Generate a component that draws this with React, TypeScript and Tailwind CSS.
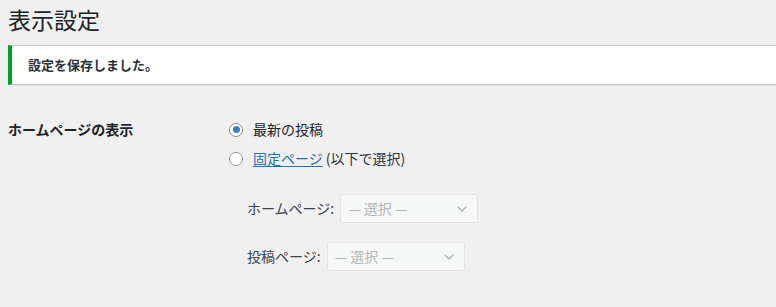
import React from 'react';

const font = { fontFamily: '"Noto Sans CJK JP", "Noto Sans", sans-serif' };

const Radio = ({ checked }: { checked?: boolean }) => (
  <span className="flex h-[14px] w-[14px] shrink-0 items-center justify-center rounded-full border border-[#8c8f94] bg-white">
    {checked && <span className="h-[7px] w-[7px] rounded-full bg-[#3582c4]" />}
  </span>
);

const DisabledSelect = () => (
  <div className="flex h-[29px] w-[138px] items-center justify-between rounded-[3px] border border-[#e2e3e5] bg-[#f6f7f7] pl-[7px] pr-[9px] text-[14px] text-[#b4b7ba]">
    <span>— 選択 —</span>
    <svg width="12" height="8" viewBox="0 0 12 8" fill="none">
      <path d="M1.5 1.5 L6 6 L10.5 1.5" stroke="#b4b7ba" strokeWidth="1.6" />
    </svg>
  </div>
);

export default function App() {
  return (
    <div className="min-h-[307px] w-[776px] overflow-hidden bg-[#f0f0f1] pl-[8px] text-[#1d2327]" style={font}>
      <h1 className="pt-[4px] text-[23px] font-normal leading-[30px]">表示設定</h1>

      <div className="mt-[11px] flex h-[40px] items-center border-y border-l-4 border-y-[#c3c4c7] border-l-[#00a32a] bg-white pl-[16px] shadow-[0_1px_1px_rgba(0,0,0,0.04)]">
        <p className="text-[13px] font-bold text-[#2c3338]">設定を保存しました。</p>
      </div>

      <div className="mt-[30px] flex">
        <div className="flex h-[29px] w-[221px] items-center text-[14px] font-bold">ホームページの表示</div>

        <div className="flex flex-col text-[14px]">
          <label className="flex h-[29px] items-center gap-[10px]">
            <Radio checked />
            <span>最新の投稿</span>
          </label>
          <label className="flex h-[29px] items-center gap-[10px]">
            <Radio />
            <span>
              <a className="text-[#2271b1] underline underline-offset-2">固定ページ</a>
              <span className="text-[#2c3338]"> (以下で選択)</span>
            </span>
          </label>

          <div className="ml-[18px] mt-[21px] flex flex-col gap-[19px] text-[#3c434a]">
            <div className="flex items-center gap-[6px]">
              <span>ホームページ:</span>
              <DisabledSelect />
            </div>
            <div className="flex items-center gap-[6px]">
              <span>投稿ページ:</span>
              <DisabledSelect />
            </div>
          </div>
        </div>
      </div>
    </div>
  );
}
